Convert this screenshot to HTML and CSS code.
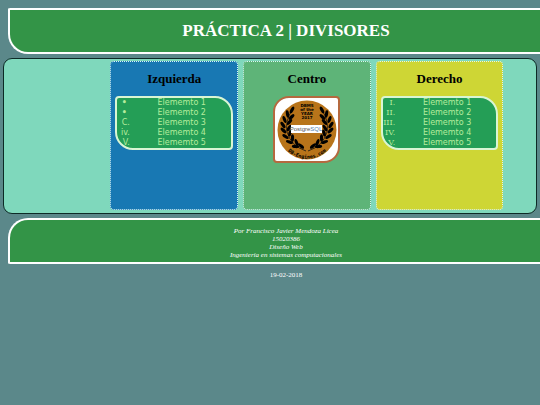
FILE: index.html
```html
<!DOCTYPE html>
<html lang="es">

<head>
    <meta charset="UTF-8">
    <meta name="viewport" content="width=device-width, initial-scale=1.0">
    <title>Práctica 2 | Divisores</title>
    <link rel="stylesheet" href="styles.css">
</head>

<body>

    <header class="encabezado">
        <h1>PRÁCTICA 2 | DIVISORES</h1>
    </header>

    <main class="contenedor">
        <section class="columna izquierda">
            <h2>Izquierda</h2>
            <ol class="lista">
                <li class="disco">Elememto 1</li>
                <li class="disco">Elememto 2</li>
                <li class="letra">Elememto 3</li>
                <li class="romano-min">Elememto 4</li>
                <li class="romano">Elememto 5</li>
            </ol>
        </section>

        <section class="columna centro">
            <h2>Centro</h2>
            <div class="marco">
                <svg viewBox="0 0 63 63" role="img" aria-label="DBMS of the year 2017: PostgreSQL">
                    <defs>
                        <path id="arco" d="M6 43 A28 28 0 0 0 58 43" />
                        <ellipse id="hoja" rx="3.7" ry="1.6" />
                        <g id="rama">
                            <path d="M31 53 Q16 48 12 34 Q10 23 17 12" fill="none" stroke="#111" stroke-width="0.8" />
                            <use href="#hoja" transform="translate(17 12) rotate(-62)" />
                            <use href="#hoja" transform="translate(12.5 16) rotate(-100)" />
                            <use href="#hoja" transform="translate(16.5 19) rotate(-45)" />
                            <use href="#hoja" transform="translate(9.5 21.5) rotate(-110)" />
                            <use href="#hoja" transform="translate(14.5 24) rotate(-50)" />
                            <use href="#hoja" transform="translate(8 27) rotate(-125)" />
                            <use href="#hoja" transform="translate(14 30) rotate(-60)" />
                            <use href="#hoja" transform="translate(8.5 32.5) rotate(-135)" />
                            <use href="#hoja" transform="translate(15 35) rotate(-75)" />
                            <use href="#hoja" transform="translate(10.5 38.5) rotate(-145)" />
                            <use href="#hoja" transform="translate(17.5 40) rotate(-90)" />
                            <use href="#hoja" transform="translate(14.5 44) rotate(-160)" />
                            <use href="#hoja" transform="translate(21.5 44.5) rotate(-110)" />
                            <use href="#hoja" transform="translate(20.5 48.5) rotate(-175)" />
                            <use href="#hoja" transform="translate(26 48) rotate(-140)" />
                        </g>
                    </defs>
                    <circle cx="32" cy="32" r="29.5" fill="#b8741a" />
                    <use href="#rama" />
                    <use href="#rama" transform="translate(64 0) scale(-1 1)" />
                    <g class="medalla-titulo">
                        <text x="32" y="9">DBMS</text>
                        <text x="32" y="13">of the</text>
                        <text x="32" y="17">YEAR</text>
                        <text x="32" y="21">2017</text>
                    </g>
                    <rect x="16" y="27" width="31" height="8" fill="#fff" />
                    <text class="medalla-nombre" x="31" y="33">Postgre<tspan fill="#5680ab">SQL</tspan></text>
                    <text class="medalla-sitio"><textPath href="#arco" startOffset="50%">DB-Engines.com</textPath></text>
                </svg>
            </div>
        </section>

        <section class="columna derecha">
            <h2>Derecho</h2>
            <ol class="lista romanos">
                <li>Elememto 1</li>
                <li>Elememto 2</li>
                <li>Elememto 3</li>
                <li>Elememto 4</li>
                <li>Elememto 5</li>
            </ol>
        </section>
    </main>

    <footer class="pie">
        <address>
            Por Francisco Javier Mendoza Licea<br>
            15020386<br>
            Diseño Web<br>
            Ingeniería en sistemas computacionales
        </address>
    </footer>

    <p class="fecha">19-02-2018</p>

</body>

</html>
```
FILE: styles.css
```css
* {
    box-sizing: border-box;
}

body {
    margin: 0;
    padding-top: 8px;
    font-family: "Liberation Serif", "Times New Roman", serif;
    text-align: center;
    color: white;
    background-color: #5b888a;
}

.encabezado,
.pie {
    margin-left: 8px;
    padding-left: 22px;
    border: 2px solid white;
    border-right: none;
    background-color: #339447;
}

.encabezado {
    padding-top: 10px;
    padding-bottom: 10px;
    border-radius: 2px 0 0 20px;
}

h1 {
    margin: 0;
    font-size: 17px;
    line-height: 22px;
}

.contenedor {
    display: flex;
    gap: 5px;
    margin: 4px 3px;
    padding: 2px 0 3px;
    border: 1px solid #0d2a26;
    border-radius: 9px;
    background-color: #7fd8bc;
}

.columna {
    flex: 0 0 24%;
    min-height: 149px;
    padding: 8px 4px;
    border: 1px dotted #d9f5f5;
    border-radius: 4px;
}

.izquierda {
    margin-left: 20%;
    background-color: #1878b3;
}

.centro {
    background-color: #5eb478;
}

.derecha {
    background-color: #ced635;
}

h2 {
    margin: 0 0 9px;
    font-size: 13px;
    line-height: 17px;
    color: black;
}

.lista {
    margin: 0;
    padding: 0 0 0 15px;
    border: 2px solid #d9f5d4;
    border-radius: 4px 18px 4px 18px;
    font-family: Verdana, "DejaVu Sans", sans-serif;
    font-size: 8px;
    line-height: 10px;
    color: #b5ec9c;
    background-color: #249e56;
}

.disco::marker {
    content: "•\a0\a0";
    font-weight: bold;
}

.letra {
    list-style-type: upper-alpha;
}

.romano-min {
    list-style-type: lower-roman;
}

.romano,
.romanos {
    list-style-type: upper-roman;
}

.romanos li::marker {
    font-family: "DejaVu Serif", serif;
}

.marco {
    width: 67px;
    margin: 0 auto;
    border: 2px solid #b5693f;
    border-radius: 16px 4px 16px 4px;
    background-color: white;
}

.marco svg {
    display: block;
    width: 100%;
}

.medalla-titulo {
    font: bold 4px "DejaVu Sans", sans-serif;
    text-anchor: middle;
}

.medalla-nombre {
    font: 6px "Liberation Sans", Arial, sans-serif;
    text-anchor: middle;
    fill: #555;
}

.medalla-sitio {
    font: bold 5px "DejaVu Sans Mono", monospace;
    text-anchor: middle;
}

.pie {
    padding-top: 7px;
    padding-bottom: 3px;
    border-radius: 20px 0 0 2px;
}

address {
    font-size: 7px;
    line-height: 8px;
}

.fecha {
    margin: 7px 0;
    padding-left: 32px;
    font-size: 7px;
    line-height: 8px;
}
```
